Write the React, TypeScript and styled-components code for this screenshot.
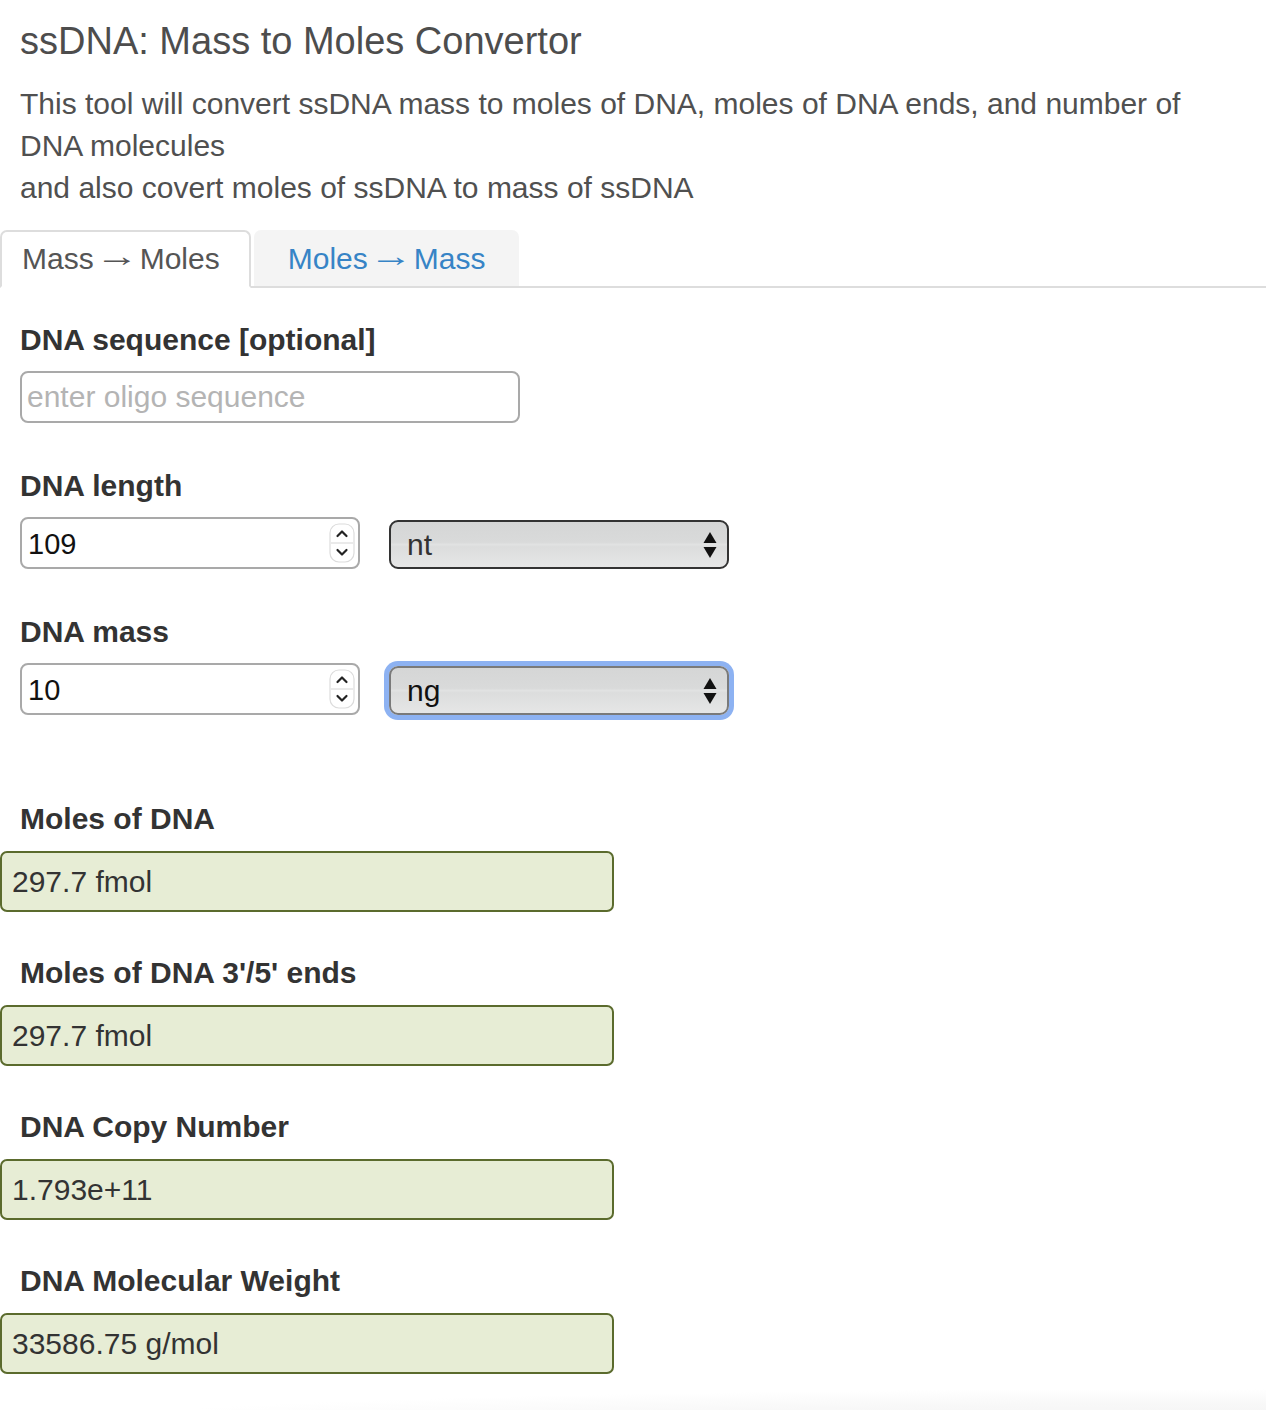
import React from "react";
import styled, { createGlobalStyle, css } from "styled-components";

const GlobalStyle = createGlobalStyle`
  html, body { margin: 0; padding: 0; background: #fff; }
  body { font-family: "Liberation Sans", Arial, sans-serif; }
  * { box-sizing: border-box; }
`;

const Page = styled.div`
  width: 1266px;
  min-height: 1410px;
  display: flex;
  flex-direction: column;
  font-family: "Liberation Sans", Arial, sans-serif;
`;

const Title = styled.h1`
  margin: 20px 0 0 20px;
  font-size: 38px;
  line-height: 42px;
  font-weight: 400;
  color: #4d4d4d;
`;

const Intro = styled.p`
  margin: 21px 20px 0 20px;
  max-width: 1190px;
  font-size: 30px;
  line-height: 42px;
  color: #505050;
`;

const TabBar = styled.div`
  margin-top: 21px;
  display: flex;
  align-items: flex-end;
  gap: 3px;
  border-bottom: 2px solid #ddd;
  height: 58px;
`;

const Tab = styled.div<{ $active?: boolean }>`
  display: flex;
  align-items: center;
  font-size: 30px;
  white-space: pre;
  border-radius: 7px 7px 0 0;
  ${(p) =>
    p.$active
      ? css`
          height: 58px;
          margin-bottom: -2px;
          padding: 0 29px 0 20px;
          background: #fff;
          color: #555;
          border: 2px solid #ddd;
          border-bottom-color: transparent;
        `
      : css`
          height: 56px;
          padding: 0 32px;
          background: #f4f4f4;
          color: #3784c6;
          border: 2px solid transparent;
          border-bottom: none;
        `}
`;

const Arrow = styled.span`
  display: inline-block;
  margin: 0 8px;
  transform: translateY(-3px) scaleX(1.45);
`;

const Form = styled.div`
  margin: 34px 0 0 20px;
  display: flex;
  flex-direction: column;
  gap: 45px;
`;

const Field = styled.div`
  display: flex;
  flex-direction: column;
  gap: 13px;
`;

const Label = styled.div`
  font-size: 30px;
  line-height: 36px;
  font-weight: 700;
  color: #333;
`;

const TextInput = styled.input`
  width: 500px;
  height: 52px;
  border: 2px solid #a9a9a9;
  border-radius: 8px;
  padding: 0 5px;
  font-family: "Liberation Sans", Arial, sans-serif;
  font-size: 30px;
  color: #222;
  outline: none;
  &::placeholder { color: #b4b4b4; }
`;

const Row = styled.div`
  display: flex;
  align-items: flex-end;
  gap: 29px;
`;

const NumberWrap = styled.div`
  position: relative;
  width: 340px;
  height: 52px;
`;

const NumberInput = styled.input`
  width: 100%;
  height: 100%;
  border: 2px solid #a9a9a9;
  border-radius: 8px;
  padding: 2px 40px 0 6px;
  font-family: "Liberation Sans", Arial, sans-serif;
  font-size: 29px;
  color: #111;
  outline: none;
  -moz-appearance: textfield;
  &::-webkit-inner-spin-button,
  &::-webkit-outer-spin-button {
    -webkit-appearance: none;
    margin: 0;
  }
`;

const Spinner = styled.svg`
  position: absolute;
  right: 5px;
  top: 6px;
  pointer-events: none;
`;

const SelectWrap = styled.div<{ $focused?: boolean }>`
  position: relative;
  width: 340px;
  height: 49px;
  border-radius: 9px;
  ${(p) =>
    p.$focused &&
    css`
      box-shadow: 0 0 0 5px #8db2f2;
    `}
`;

const Select = styled.select<{ $focused?: boolean }>`
  appearance: none;
  -webkit-appearance: none;
  width: 100%;
  height: 100%;
  border: 2px solid ${(p) => (p.$focused ? "#7a7a7a" : "#333")};
  border-radius: 9px;
  padding: 0 40px 0 16px;
  font-family: "Liberation Sans", Arial, sans-serif;
  font-size: 30px;
  color: ${(p) => (p.$focused ? "#111" : "#333")};
  background: linear-gradient(
    to bottom,
    #d5d6d6 0%,
    #d9dada 45%,
    #e1e2e2 50%,
    #dcdddd 55%,
    #e6e6e6 100%
  );
  outline: none;
`;

const SelectArrows = styled.svg`
  position: absolute;
  right: 12px;
  top: 50%;
  transform: translateY(-50%);
  pointer-events: none;
`;

const Results = styled.div`
  margin-top: 86px;
  display: flex;
  flex-direction: column;
  gap: 43px;
`;

const Result = styled.div`
  display: flex;
  flex-direction: column;
  gap: 14px;
`;

const ResultLabel = styled(Label)`
  margin-left: 20px;
`;

const ResultBox = styled.div`
  width: 614px;
  height: 61px;
  display: flex;
  align-items: center;
  padding: 0 10px;
  background: #e7edd5;
  border: 2px solid #5b6b2d;
  border-radius: 7px;
  font-size: 30px;
  color: #333;
`;

const FooterShade = styled.div`
  margin-top: 6px;
  height: 40px;
  background: radial-gradient(
    140% 120% at 100% 100%,
    #f4f4f4 0%,
    #f8f8f8 35%,
    #ffffff 65%
  );
`;

const NumberField = ({ value }: { value: string }) => (
  <NumberWrap>
    <NumberInput type="number" defaultValue={value} />
    <Spinner width="26" height="40" viewBox="0 0 26 40">
      <rect x="1" y="1" width="24" height="38" rx="9" fill="#fff" stroke="#dcdcdc" strokeWidth="1.2" />
      <line x1="2" y1="20" x2="24" y2="20" stroke="#dcdcdc" strokeWidth="1.2" />
      <polyline points="8.5,13 13,8.5 17.5,13" fill="none" stroke="#222" strokeWidth="2.2" strokeLinecap="round" strokeLinejoin="round" />
      <polyline points="8.5,27 13,31.5 17.5,27" fill="none" stroke="#222" strokeWidth="2.2" strokeLinecap="round" strokeLinejoin="round" />
    </Spinner>
  </NumberWrap>
);

const UnitSelect = ({ options, value, focused }: { options: string[]; value: string; focused?: boolean }) => (
  <SelectWrap $focused={focused}>
    <Select $focused={focused} defaultValue={value}>
      {options.map((o) => (
        <option key={o} value={o}>
          {o}
        </option>
      ))}
    </Select>
    <SelectArrows width="14" height="28" viewBox="0 0 14 28">
      <polygon points="7,1 13.5,12 0.5,12" fill="#111" />
      <polygon points="0.5,16 13.5,16 7,27" fill="#111" />
    </SelectArrows>
  </SelectWrap>
);

const results = [
  { label: "Moles of DNA", value: "297.7 fmol" },
  { label: "Moles of DNA 3'/5' ends", value: "297.7 fmol" },
  { label: "DNA Copy Number", value: "1.793e+11" },
  { label: "DNA Molecular Weight", value: "33586.75 g/mol" },
];

export default function App() {
  return (
    <Page>
      <GlobalStyle />
      <Title>ssDNA: Mass to Moles Convertor</Title>
      <Intro>
        This tool will convert ssDNA mass to moles of DNA, moles of DNA ends, and number of DNA molecules
        <br />
        and also covert moles of ssDNA to mass of ssDNA
      </Intro>
      <TabBar>
        <Tab $active>
          Mass<Arrow>→</Arrow>Moles
        </Tab>
        <Tab>
          Moles<Arrow>→</Arrow>Mass
        </Tab>
      </TabBar>
      <Form>
        <Field>
          <Label>DNA sequence [optional]</Label>
          <TextInput type="text" placeholder="enter oligo sequence" />
        </Field>
        <Field>
          <Label>DNA length</Label>
          <Row>
            <NumberField value="109" />
            <UnitSelect options={["nt", "kb"]} value="nt" />
          </Row>
        </Field>
        <Field>
          <Label>DNA mass</Label>
          <Row>
            <NumberField value="10" />
            <UnitSelect options={["pg", "ng", "µg", "mg"]} value="ng" focused />
          </Row>
        </Field>
      </Form>
      <Results>
        {results.map((r) => (
          <Result key={r.label}>
            <ResultLabel>{r.label}</ResultLabel>
            <ResultBox>{r.value}</ResultBox>
          </Result>
        ))}
      </Results>
      <FooterShade />
    </Page>
  );
}
